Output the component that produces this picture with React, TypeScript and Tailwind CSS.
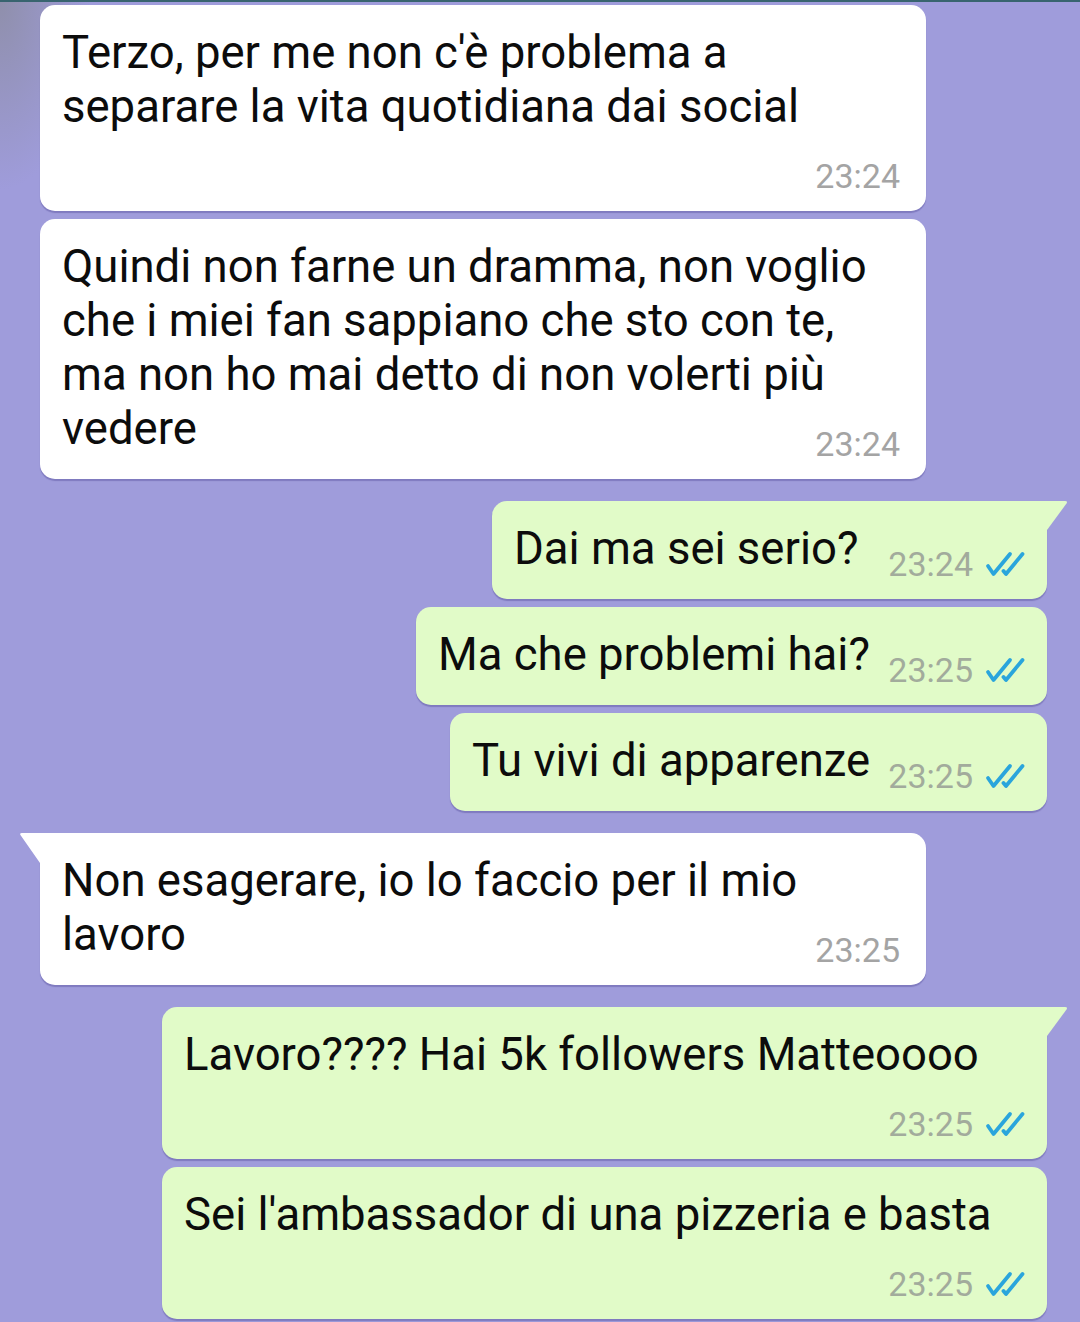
import type { ReactNode } from 'react';

type Msg = {
    out: boolean;
    lines: string[];
    time: string;
    width: number;
    timeOwnRow?: boolean;
    tail?: boolean;
};

const messages: Msg[] = [
    { out: false, lines: ["Terzo, per me non c'è problema a", 'separare la vita quotidiana dai social'], time: '23:24', width: 886, timeOwnRow: true },
    { out: false, lines: ['Quindi non farne un dramma, non voglio', 'che i miei fan sappiano che sto con te,', 'ma non ho mai detto di non volerti più', 'vedere'], time: '23:24', width: 886 },
    { out: true, lines: ['Dai ma sei serio?'], time: '23:24', width: 555, tail: true },
    { out: true, lines: ['Ma che problemi hai?'], time: '23:25', width: 631 },
    { out: true, lines: ['Tu vivi di apparenze'], time: '23:25', width: 597 },
    { out: false, lines: ['Non esagerare, io lo faccio per il mio', 'lavoro'], time: '23:25', width: 886, tail: true },
    { out: true, lines: ['Lavoro???? Hai 5k followers Matteoooo'], time: '23:25', width: 885, timeOwnRow: true, tail: true },
    { out: true, lines: ["Sei l'ambassador di una pizzeria e basta"], time: '23:25', width: 885, timeOwnRow: true },
];

function DoubleCheck() {
    return (
        <svg width="40" height="26" viewBox="0 0 40 26" fill="none" stroke="#2aa5dc" strokeWidth="3.8" strokeLinecap="round" strokeLinejoin="round">
            <path d="M3 15 L8.5 23 L25 3" />
            <path d="M18.5 20 L21 23 L37.5 3" />
        </svg>
    );
}

function Stamp({ time, out }: { time: string; out: boolean }) {
    return (
        <div className="flex items-center gap-[12px] shrink-0 translate-y-[6px] ml-[12px]">
            <span className={`text-[34px] leading-[36px] ${out ? 'text-[#a2ab9c]' : 'text-[#a4a4a4]'}`}>{time}</span>
            {out && <DoubleCheck />}
        </div>
    );
}

function Tail({ out }: { out: boolean }) {
    if (out) {
        return (
            <svg className="absolute top-0 -right-[21px]" width="22" height="30" viewBox="0 0 22 30">
                <path d="M0 0 L19 0 Q22 0 20.5 2.5 L1 29 L0 29 Z" fill="#e1fbc8" />
            </svg>
        );
    }
    return (
        <svg className="absolute top-0 -left-[20px]" width="21" height="31" viewBox="0 0 21 31">
            <path d="M21 0 L2 0 Q-1 0 0.8 2.5 L20 30 L21 30 Z" fill="#ffffff" />
        </svg>
    );
}

function Bubble({ m }: { m: Msg }) {
    const rows: ReactNode[] = [];
    const last = m.timeOwnRow ? m.lines.length : m.lines.length - 1;
    m.lines.slice(0, last).forEach((l, i) => (
        rows.push(<div key={i} className="whitespace-nowrap">{l}</div>)
    ));
    rows.push(
        <div key="last" className="flex items-end justify-between h-[54px]">
            <span className="whitespace-nowrap">{m.timeOwnRow ? '' : m.lines[m.lines.length - 1]}</span>
            <Stamp time={m.time} out={m.out} />
        </div>
    );
    const corner = m.tail ? (m.out ? 'rounded-tr-none' : 'rounded-tl-none') : '';
    return (
        <div
            style={{ width: m.width }}
            className={`relative rounded-[15px] ${corner} pt-[21px] pb-[23px] pl-[22px] ${m.out ? 'pr-[22px] bg-[#e1fbc8]' : 'pr-[26px] bg-white'} shadow-[0_2px_1px_rgba(70,60,140,0.35)]`}
        >
            {m.tail && <Tail out={m.out} />}
            <div className="text-[45.5px] leading-[54px] text-[#0c0c0c]">{rows}</div>
        </div>
    );
}

export default function App() {
    const gapBefore = (i: number) => {
        if (i === 0) return 'mt-[3px]';
        const prev = messages[i - 1];
        const cur = messages[i];
        return prev.out !== cur.out || cur.tail ? 'mt-[22px]' : 'mt-[8px]';
    };
    return (
        <div className="w-[1080px] h-[1322px] overflow-hidden bg-[#9f9cdb] bg-[image:radial-gradient(ellipse_90px_190px_at_0%_0%,#8f8fab_0%,rgba(159,156,219,0)_100%)] font-['Roboto','Liberation_Sans',sans-serif]">
            <div className="h-[2px] bg-[#38646f]" />
            <div className="flex flex-col">
                {messages.map((m, i) => (
                    <div key={i} className={`flex ${gapBefore(i)} ${m.out ? 'justify-end pr-[33px]' : 'justify-start pl-[40px]'}`}>
                        <Bubble m={m} />
                    </div>
                ))}
            </div>
        </div>
    );
}
